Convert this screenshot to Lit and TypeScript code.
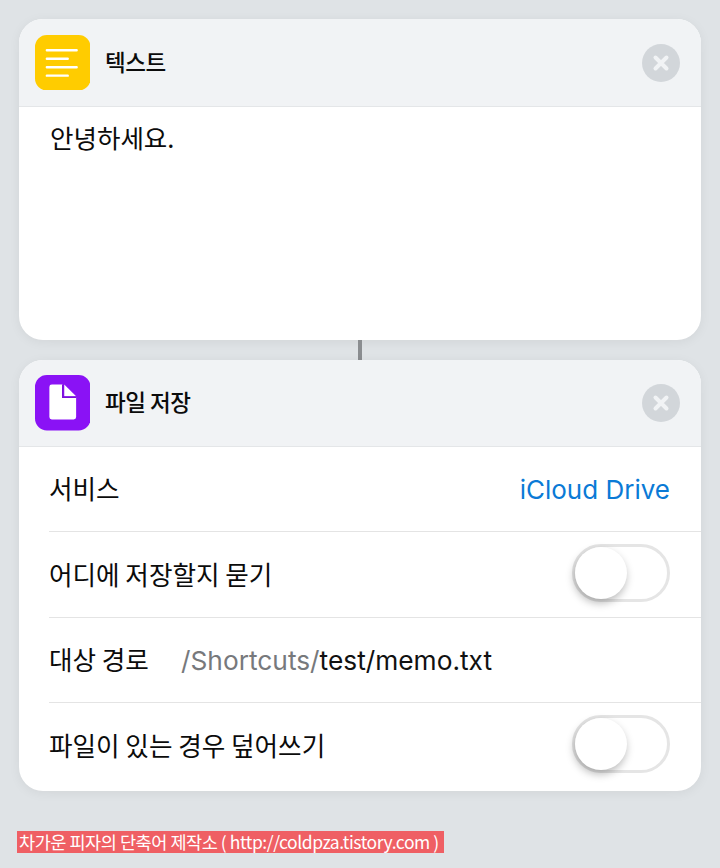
import { LitElement, html, css, svg } from 'lit';
import { customElement } from 'lit/decorators.js';

const textIcon = svg`<svg width="55.500" height="55.500" viewBox="0 0 56 56">
  <rect width="56" height="56" rx="12" fill="#ffcc00"/>
  <path d="M12 15.500H42M12 24H33M12 32.500H42M12 41H33" stroke="#fff" stroke-width="2.500" stroke-linecap="round"/>
</svg>`;

const fileIcon = svg`<svg width="55.500" height="55.500" viewBox="0 0 56 56">
  <rect width="56" height="56" rx="12" fill="#8a12f5"/>
  <path d="M17 9.500H28V22.500H41.500V42.500Q41.500 45 39 45H17Q14.500 45 14.500 42.500V12Q14.500 9.500 17 9.500Z" fill="#fff"/>
  <path d="M29.500 9.500L41.500 21.500H29.500Z" fill="#fff"/>
  <path d="M28 9.500V22.500H41.500" fill="none" stroke="#7a0fd8" stroke-width="1.500"/>
</svg>`;

const closeIcon = svg`<svg width="38" height="38" viewBox="0 0 38 38">
  <circle cx="19" cy="19" r="19" fill="#d2d6da"/>
  <path d="M13.500 13.500L24.500 24.500M24.500 13.500L13.500 24.500" stroke="#f1f3f5" stroke-width="4" stroke-linecap="round"/>
</svg>`;

@customElement('app-root')
export class AppRoot extends LitElement {
  static styles = css`
    :host {
      display: block;
      width: 720px;
      height: 868px;
      overflow: hidden;
      background: #dfe3e6;
      font-family: 'Noto Sans CJK KR', 'Liberation Sans', sans-serif;
      color: #0b0b0b;
    }

    .page {
      display: flex;
      flex-direction: column;
      padding: 19px 19px 0;
    }

    .card {
      border-radius: 24px;
      background: #fff;
      overflow: hidden;
      box-shadow: 0 2px 12px rgba(0, 0, 0, 0.06);
    }

    .form {
      padding-bottom: 3px;
    }

    .head {
      display: flex;
      align-items: center;
      height: 87px;
      padding: 0 21px 0 15.500px;
      background: #f1f3f5;
      border-bottom: 1px solid #e4e6e8;
      box-sizing: border-box;
    }

    .head.first {
      height: 88px;
    }

    .title {
      flex: 1;
      margin: 0 0 4px 15px;
      font-size: 22.500px;
      font-weight: 500;
      letter-spacing: -0.5px;
    }

    .head svg {
      display: block;
    }

    .body {
      height: 233px;
      padding: 11px 31px;
      box-sizing: border-box;
      font-size: 25.500px;
      line-height: 38px;
    }

    .link {
      width: 4px;
      height: 20px;
      margin-left: 339px;
      background: #8a8d90;
    }

    .row {
      display: flex;
      align-items: center;
      justify-content: space-between;
      height: 85px;
      margin-left: 30px;
      padding-right: 31px;
      border-bottom: 1px solid #e4e4e4;
      box-sizing: border-box;
      font-size: 25.600px;
    }

    .row:nth-of-type(3) {
      height: 86px;
    }

    .row:last-child {
      border-bottom: none;
    }

    .row > .label {
      margin-bottom: 3px;
    }

    .value {
      color: #0a7ad6;
      font-family: Inter, 'Liberation Sans', sans-serif;
      font-size: 26px;
    }

    .path {
      justify-content: flex-start;
    }

    .path .label {
      width: 132px;
    }

    .path-value {
      font-family: Inter, 'Liberation Sans', sans-serif;
      font-size: 26.300px;
      color: #111;
    }

    .path-value span {
      color: #77797c;
    }

    .toggle {
      position: relative;
      width: 98px;
      height: 58px;
      margin-bottom: 3px;
      border: 3px solid #e5e5e5;
      border-radius: 30px;
      box-sizing: border-box;
      background: #fff;
    }

    .knob {
      position: absolute;
      top: 0;
      left: 0;
      width: 52px;
      height: 52px;
      border-radius: 50%;
      background: #fff;
      box-shadow: -1px 4px 8px rgba(0, 0, 0, 0.28);
    }

    .credit {
      align-self: flex-start;
      margin: 40px 0 0 -2px;
      padding: 0 5px 0 2px;
      height: 22px;
      line-height: 22px;
      background: #ef5f64;
      color: #fff;
      font-size: 17.500px;
      letter-spacing: -0.44px;
      white-space: nowrap;
    }
  `;

  private toggle() {
    return html`<div class="toggle"><div class="knob"></div></div>`;
  }

  render() {
    return html`
      <div class="page">
        <section class="card">
          <div class="head first">
            ${textIcon}
            <div class="title">텍스트</div>
            ${closeIcon}
          </div>
          <div class="body">안녕하세요.</div>
        </section>
        <div class="link"></div>
        <section class="card form">
          <div class="head">
            ${fileIcon}
            <div class="title">파일 저장</div>
            ${closeIcon}
          </div>
          <div class="row">
            <span class="label">서비스</span>
            <span class="value">iCloud Drive</span>
          </div>
          <div class="row">
            <span class="label">어디에 저장할지 묻기</span>
            ${this.toggle()}
          </div>
          <div class="row path">
            <span class="label">대상 경로</span>
            <span class="path-value"><span>/Shortcuts/</span>test/memo.txt</span>
          </div>
          <div class="row">
            <span class="label">파일이 있는 경우 덮어쓰기</span>
            ${this.toggle()}
          </div>
        </section>
        <div class="credit">차가운 피자의 단축어 제작소 ( http://coldpza.tistory.com )</div>
      </div>
    `;
  }
}

declare global {
  interface HTMLElementTagNameMap {
    'app-root': AppRoot;
  }
}
